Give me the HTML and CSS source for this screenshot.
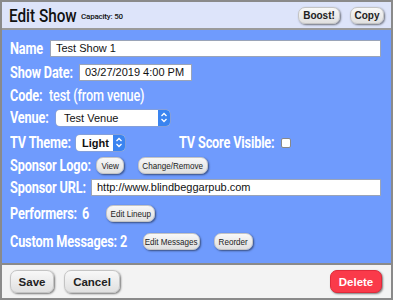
FILE: index.html
```html
<!DOCTYPE html>
<html>
<head>
<meta charset="utf-8">
<link rel="stylesheet" href="styles.css">
</head>
<body>
<div class="dialog">
  <div class="header">
    <div class="title"><span class="cond">Edit Show</span></div>
    <div class="capacity">Capacity: 50</div>
    <div class="spacer"></div>
    <button class="btn boost">Boost!</button>
    <button class="btn copy">Copy</button>
  </div>
  <div class="body">
    <div class="row r-name">
      <span class="label w40"><span class="cond">Name</span></span>
      <div class="input grow">Test Show 1</div>
    </div>
    <div class="row r-date">
      <span class="label w69"><span class="cond">Show Date:</span></span>
      <div class="input date">03/27/2019 4:00 PM</div>
    </div>
    <div class="row r-code">
      <span class="label w39"><span class="cond">Code:</span></span>
      <span class="label val"><span class="cond">test (from venue)</span></span>
    </div>
    <div class="row r-venue">
      <span class="label w46"><span class="cond">Venue:</span></span>
      <div class="select venue"><span>Test Venue</span><span class="arrows"><svg width="8" height="11" viewBox="0 0 8 11"><path d="M1.5 4 L4 1.5 L6.5 4 M1.5 7 L4 9.5 L6.5 7" fill="none" stroke="#fff" stroke-width="1.3"/></svg></span></div>
    </div>
    <div class="row r-theme">
      <span class="label w66"><span class="cond">TV Theme:</span></span>
      <div class="select theme"><span>Light</span><span class="arrows"><svg width="8" height="11" viewBox="0 0 8 11"><path d="M1.5 4 L4 1.5 L6.5 4 M1.5 7 L4 9.5 L6.5 7" fill="none" stroke="#fff" stroke-width="1.3"/></svg></span></div>
      <span class="label score"><span class="cond">TV Score Visible:</span></span>
      <span class="check"></span>
    </div>
    <div class="row r-logo">
      <span class="label w86"><span class="cond">Sponsor Logo:</span></span>
      <button class="btn sm view"><span class="cond">View</span></button>
      <button class="btn sm change"><span class="cond">Change/Remove</span></button>
    </div>
    <div class="row r-url">
      <span class="label w81"><span class="cond">Sponsor URL:</span></span>
      <div class="input grow">http://www.blindbeggarpub.com</div>
    </div>
    <div class="row r-perf">
      <span class="label w72"><span class="cond">Performers:</span></span>
      <span class="label n24"><span class="cond">6</span></span>
      <button class="btn sm lineup"><span class="cond">Edit Lineup</span></button>
    </div>
    <div class="row r-msg">
      <span class="label w110"><span class="cond">Custom Messages:</span></span>
      <span class="label n23"><span class="cond">2</span></span>
      <button class="btn sm edmsg"><span class="cond">Edit Messages</span></button>
      <button class="btn sm reorder"><span class="cond">Reorder</span></button>
    </div>
  </div>
  <div class="footer">
    <button class="btn big save">Save</button>
    <button class="btn big cancel">Cancel</button>
    <div class="spacer"></div>
    <button class="btn big delete">Delete</button>
  </div>
</div>
</body>
</html>
```
FILE: styles.css
```css
* { box-sizing: border-box; }
html, body { margin: 0; padding: 0; }
body { width: 393px; height: 300px; overflow: hidden; font-family: Roboto, "Liberation Sans", sans-serif; }
.dialog {
  width: 393px; height: 300px;
  border: 2px solid #8a8a8a;
  display: flex; flex-direction: column;
  background: #6f9bfd;
}
.cond { display: inline-block; transform: scaleX(0.77); transform-origin: left center; white-space: nowrap; }
.btn .cond { transform: scaleX(0.85); transform-origin: center center; }
.title .cond { transform: scaleX(0.85); }
.header {
  height: 28px;
  background: #dde4fa;
  border-bottom: 2px solid #9a9a9a;
  display: flex; align-items: center;
  padding: 0 7px 0 7px;
}
.title {
  font-size: 18px; font-weight: 500; color: #111;
  width: 72px; white-space: nowrap;
}
.capacity { font-size: 8px; color: #111; margin-top: 2px; font-weight: 500; letter-spacing: -0.2px; }
.spacer { flex: 1; }
.btn {
  font-family: "Liberation Sans", Arial, sans-serif;
  font-weight: bold; font-size: 9px; color: #222;
  background: linear-gradient(#f8f8f8, #e0e0e0);
  border: 1px solid #c4c4c4; border-radius: 7px;
  box-shadow: 1px 1px 2px rgba(0,0,0,0.5);
  padding: 0; height: 17px; margin: 0;
  display: flex; align-items: center; justify-content: center; white-space: nowrap;
}
.header .btn { height: 17px; font-size: 10px; margin-top: 1px; }
.boost { width: 42px; }
.copy { width: 34px; margin-left: 10px !important; }
.body { flex: 1; padding: 8px 10px 0 8px; display: flex; flex-direction: column; }
.row { display: flex; align-items: center; }
.label {
  color: #fff; font-size: 16.5px; font-weight: bold; white-space: nowrap;
  letter-spacing: -0.2px; display: block; flex: none;
  font-family: Roboto, "Liberation Sans", sans-serif;
}
.w39 { width: 39px; } .w40 { width: 40px; } .w46 { width: 46px; } .w66 { width: 66px; }
.w69 { width: 69px; } .w72 { width: 72px; } .w81 { width: 81px; } .w86 { width: 86px; }
.w110 { width: 110px; } .n23 { width: 23px; } .n24 { width: 24px; }
.input {
  background: #fff; border: 1px solid #9aa4b8;
  font-family: "Liberation Sans", Arial, sans-serif; font-size: 11px; color: #111;
  height: 17px; line-height: 15px; padding: 0 5px;
}
.grow { flex: 1; }
.r-name { height: 17px; margin-top: 2px; }
.r-date { height: 17px; margin-top: 7px; }
.date { width: 113px; }
.r-code { height: 17px; margin-top: 6px; }
.r-code .val { font-weight: 500; }
.r-venue { height: 17px; margin-top: 5px; }
.select {
  background: #fff; border-radius: 4px; height: 16px;
  display: flex; align-items: center; justify-content: space-between;
  font-family: "Liberation Sans", Arial, sans-serif; font-size: 11px; color: #111;
  padding-left: 8px; box-shadow: 0 0 0 0.5px #9aa4b8;
}
.arrows {
  width: 12px; height: 16px; background: #3a84f0; border-radius: 0 4px 4px 0;
  display: flex; align-items: center; justify-content: center;
}
.venue { width: 114px; }
.r-theme { height: 17px; margin-top: 8px; }
.theme { width: 49px; padding-left: 6px; font-weight: bold; }
.score { margin-left: 54px; width: 102px; }
.check {
  width: 10px; height: 10px; background: #fff; border: 1px solid #888; border-radius: 2px;
}
.r-logo { height: 17px; margin-top: 6px; }
.r-url { height: 17px; margin-top: 5px; }
.r-perf { height: 17px; margin-top: 9px; }
.r-msg { height: 17px; margin-top: 11px; }
.btn.sm { font-size: 9.5px; font-weight: normal; height: 17px; }
.view { width: 28px; }
.change { width: 70px; margin-left: 14px; }
.lineup { width: 49px; }
.edmsg { width: 57px; }
.reorder { width: 39px; margin-left: 14px; }
.footer {
  height: 35px; background: #f3f3f3; border-top: 2px solid #8a8a8a;
  display: flex; align-items: center; padding: 0 9px 0 8px;
}
.btn.big { height: 23px; font-size: 11.5px; border-radius: 7px; }
.save { width: 44px; }
.cancel { width: 56px; margin-left: 10px; }
.btn.big.delete { width: 52px; background: #fa3a4a; color: #fff; border-color: #e02a3a; }
```
